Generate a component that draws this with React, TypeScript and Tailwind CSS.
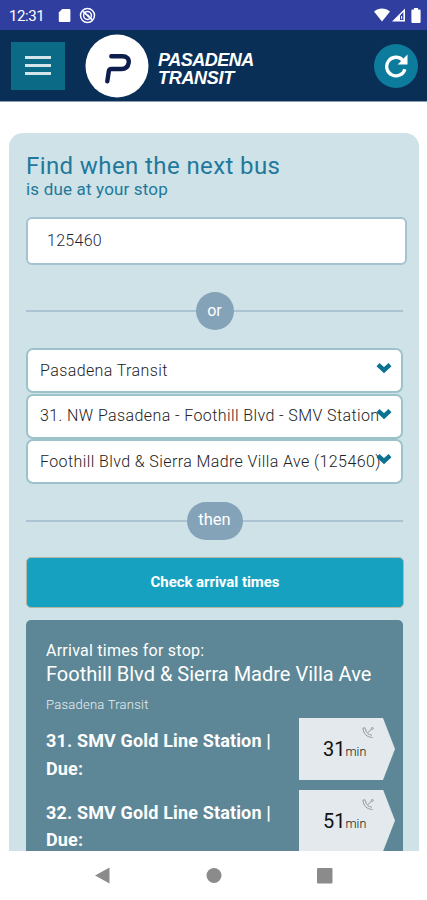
import React from "react";

interface DividerProps {
  label: string;
  className: string;
}

interface ArrivalRowProps {
  route: string;
  minutes: number;
}

const stopFilters = [
  "Pasadena Transit",
  "31. NW Pasadena - Foothill Blvd - SMV Station",
  "Foothill Blvd & Sierra Madre Villa Ave (125460)",
];

const arrivals = [
  { route: "31. SMV Gold Line Station |", minutes: 31 },
  { route: "32. SMV Gold Line Station |", minutes: 51 },
];

function StatusBar() {
  return (
    <div className="flex h-[30px] shrink-0 items-center bg-[#303f9f] pl-[9px] pr-[6px] text-white">
      <span className="w-[49px] whitespace-nowrap pt-0.5 text-[15px] leading-none tracking-[-0.4px]">
        12:31
      </span>
      {/* SD card */}
      <svg width="13" height="15" viewBox="0 0 13 15" className="mt-px">
        <path d="M4.2 1H11.4a1 1 0 0 1 1 1v11a1 1 0 0 1-1 1H1.8a1 1 0 0 1-1-1V4.6z" fill="currentColor" />
      </svg>
      {/* Sync disabled */}
      <svg width="17" height="17" viewBox="0 0 17 17" className="ml-2" fill="none" stroke="currentColor">
        <circle cx="8.5" cy="8.5" r="7" strokeWidth="1.5" />
        <circle cx="8.5" cy="8.5" r="3.9" strokeWidth="1.5" />
        <path d="M4 4.4 13 12.6" strokeWidth="1.9" />
        <path d="M8 8.5h2.2" strokeWidth="1.6" />
      </svg>
      <div className="ml-auto flex items-center">
        <svg width="16" height="14" viewBox="0 0 16 14">
          <path d="M0 3.6C4.6-.4 11.4-.4 16 3.6L8 13.6z" fill="currentColor" />
        </svg>
        <svg width="15" height="14" viewBox="0 0 15 14" className="ml-[1px]">
          <path d="M1 13.5 14 .5v13z" fill="currentColor" />
          <path d="M9 7.6 12.4 4v8H9z" fill="#303f9f" />
          <path d="M10.6 8v3" stroke="currentColor" strokeWidth="1" />
        </svg>
        <svg width="10" height="15" viewBox="0 0 10 15" className="ml-[5px]">
          <path d="M3 0h4v1.6h1.6a1 1 0 0 1 1 1V14a1 1 0 0 1-1 1H1.4a1 1 0 0 1-1-1V2.6a1 1 0 0 1 1-1H3z" fill="currentColor" />
        </svg>
      </div>
    </div>
  );
}

function Header() {
  return (
    <header className="flex h-[72px] shrink-0 items-center border-b border-[#8b9bb0] bg-[#0a2f57] pl-[11px] pr-[9px]">
      <button className="flex h-[48px] w-[54px] flex-col items-center justify-center gap-[5px] bg-[#0b6b87]">
        <span className="h-[3px] w-[26px] bg-[#d3e6ec]" />
        <span className="h-[3px] w-[26px] bg-[#d3e6ec]" />
        <span className="h-[3px] w-[26px] bg-[#d3e6ec]" />
      </button>
      <svg width="64" height="64" viewBox="0 0 64 64" className="ml-5">
        <circle cx="32" cy="32" r="31.5" fill="#fff" />
        <path
          d="M26.3 22.200H37.200C41.800 22.200 44.300 24.800 43.700 28.700 43.100 32.700 40.500 35 36.500 35H26.500Q24.200 35 23.800 37.200L22.300 47.300"
          fill="none"
          stroke="#0d1d4c"
          strokeWidth="4.4"
          strokeLinecap="round"
          strokeLinejoin="round"
        />
      </svg>
      <div className="ml-[9px] mt-[7px] whitespace-nowrap font-['Liberation_Sans',sans-serif] text-[18px] font-bold italic leading-[18px] text-white">
        <div className="tracking-[-0.5px]">PASADENA</div>
        <div className="tracking-[-0.3px]">TRANSIT</div>
      </div>
      <button className="ml-auto flex h-[44px] w-[44px] items-center justify-center rounded-full bg-[#0d7c9c]">
        <svg width="24" height="24" viewBox="0 0 24 24">
          <path d="M18.600 6A9.300 9.300 0 1 0 20.900 15.200" fill="none" stroke="#fff" strokeWidth="3.3" />
          <path d="M23.500.6V10.400H13.700z" fill="#fff" />
        </svg>
      </button>
    </header>
  );
}

function Divider({ label, className }: DividerProps) {
  return (
    <div className="mr-4 flex items-center">
      <span className="h-[2px] flex-1 bg-[#aac4d2]" />
      <span
        className={`flex items-center justify-center rounded-full bg-[#84a3b8] pb-px text-white ${className}`}
      >
        {label}
      </span>
      <span className="h-[2px] flex-1 bg-[#aac4d2]" />
    </div>
  );
}

function FilterSelect({ value }: { value: string }) {
  return (
    <div className="relative flex h-[45px] items-center rounded-[7px] border-2 border-[#9dc3ca] bg-white pl-3 text-[16px] font-light tracking-[0.4px] text-[#222]">
      <span className="whitespace-nowrap">{value}</span>
      <svg width="16" height="12" viewBox="0 0 16 12" className="absolute right-[9px] top-[12px]">
        <path d="M2 2.600 8 8.200 14 2.600" fill="none" stroke="#0b7391" strokeWidth="4.400" />
      </svg>
    </div>
  );
}

function LiveSignal() {
  return (
    <svg
      width="13"
      height="13"
      viewBox="0 0 13 13"
      className="absolute left-[63px] top-[8px]"
      fill="none"
      stroke="#8f999c"
      strokeWidth="1"
    >
      <path d="M1 2C1.500 8 4.500 11 10.500 11.500M3.500 2.500C3.800 6.500 6 8.800 10 9.200M1 2h2.500M6 6.500 9.500 3.200" />
      <circle cx="10.300" cy="2.500" r="1" />
    </svg>
  );
}

function ArrivalRow({ route, minutes }: ArrivalRowProps) {
  return (
    <div className="flex h-[71.500px] items-start justify-between">
      <div className="pt-[9px] text-[18px] font-bold leading-[27.500px] tracking-[0.15px] text-white">
        <div className="whitespace-nowrap">{route}</div>
        <div>Due:</div>
      </div>
      <div className="relative h-[62px] w-[96px] shrink-0 bg-[#e3e9ec] text-[#111] [clip-path:polygon(0_0,84px_0,100%_50%,84px_100%,0_100%)]">
        <LiveSignal />
        <div className="flex items-baseline pl-6 pt-[17px] leading-[28px]">
          <span className="text-[20px]">{minutes}</span>
          <span className="text-[12.500px] font-light">min</span>
        </div>
      </div>
    </div>
  );
}

function NavigationBar() {
  return (
    <nav className="flex h-[49px] shrink-0 items-center bg-white">
      <svg width="427" height="49" viewBox="0 0 427 49" fill="#8b8b8b">
        <path d="M95 24.500 109.500 16.500V32.500z" />
        <circle cx="214" cy="24.500" r="7.500" />
        <rect x="317" y="17" width="15.500" height="15.500" rx="1" />
      </svg>
    </nav>
  );
}

export default function App() {
  return (
    <div className="flex h-[900px] w-[427px] flex-col overflow-hidden bg-white font-['Roboto',sans-serif]">
      <StatusBar />
      <Header />
      <main className="min-h-0 flex-1 overflow-hidden pl-[9px] pr-[8px] pt-[31px]">
        <section className="h-[760px] rounded-t-[14px] bg-[#cee2e8] pl-[17px]">
          <h1 className="whitespace-nowrap pt-[18px] text-[#22789a]">
            <span className="block text-[24px] leading-[30px] tracking-[0.4px]">Find when the next bus</span>
            <span className="block text-[17px] leading-[17px] tracking-[0.17px]">is due at your stop</span>
          </h1>

          <div className="mr-3 mt-[18.500px] flex h-[48px] items-center rounded-[6px] border-2 border-[#a5c2d0] bg-white pl-[19px] text-[16px] font-light tracking-[0.3px] text-[#1f1f3a]">
            125460
          </div>

          <div className="mt-[27.500px]">
            <Divider label="or" className="h-[38px] w-[38px] text-[16px]" />
          </div>

          <div className="mr-4 mt-[18px] flex flex-col gap-[0.500px]">
            {stopFilters.map((value) => (
              <FilterSelect key={value} value={value} />
            ))}
          </div>

          <div className="mt-[18px]">
            <Divider label="then" className="h-[38px] w-[56px] text-[16.500px]" />
          </div>

          <button className="mt-[17px] flex h-[51px] w-[378px] items-center justify-center rounded-[5px] border border-[#b9b5a0] bg-[#16a1c1] text-[15px] font-bold tracking-[-0.05px] text-white">
            Check arrival times
          </button>

          <div className="mr-4 mt-3 h-[300px] rounded-t-[5px] bg-[#5d8796] pl-5 pr-[8px] pt-5 text-white">
            <p className="text-[16px] leading-[21px] tracking-[0.25px]">Arrival times for stop:</p>
            <h2 className="whitespace-nowrap text-[20px] leading-[27px]">
              Foothill Blvd & Sierra Madre Villa Ave
            </h2>
            <p className="mb-[3px] mt-[7px] text-[13px] font-light leading-[20px] tracking-[0.25px] text-[#e8eff2]">
              Pasadena Transit
            </p>
            {arrivals.map((arrival) => (
              <ArrivalRow key={arrival.route} route={arrival.route} minutes={arrival.minutes} />
            ))}
          </div>
        </section>
      </main>
      <NavigationBar />
    </div>
  );
}
